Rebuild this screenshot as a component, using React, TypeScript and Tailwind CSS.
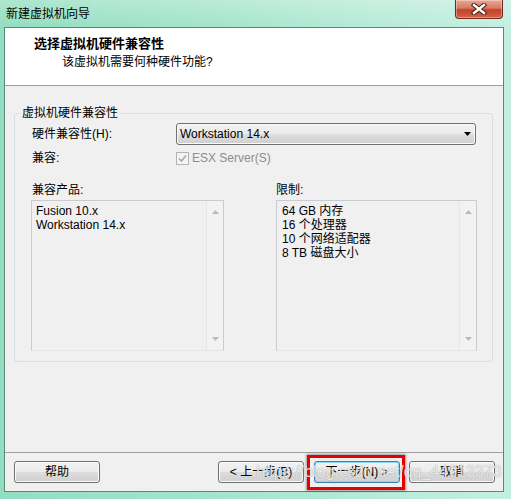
import React from "react";

const font = "font-['Liberation_Sans','Noto_Sans_CJK_SC',sans-serif]";
const btnBg =
  "bg-[linear-gradient(to_bottom,#f2f2f2_0%,#ebebeb_48%,#dddddd_52%,#cfcfcf_100%)]";

function Btn({ children, primary = false }: { children: React.ReactNode; primary?: boolean }) {
  return (
    <div
      className={`w-[86px] h-[22px] rounded-[3px] border flex items-center justify-center text-[12px] leading-[14px] text-black ${btnBg} ${
        primary
          ? "border-[#3c7fb1] shadow-[inset_0_0_0_1px_#8fd8f2]"
          : "border-[#707070] shadow-[inset_0_0_0_1px_#fbfbfb]"
      }`}
    >
      {children}
    </div>
  );
}

function ScrollCol() {
  return (
    <div className="w-[17px] h-full flex flex-col items-center justify-between py-[9px] border-l border-[#e6e6e6] bg-[#f2f2f2]">
      <svg width="7" height="4" viewBox="0 0 7 4">
        <path d="M0 4 L3.5 0 L7 4 Z" fill="#b9b9b9" />
      </svg>
      <svg width="7" height="4" viewBox="0 0 7 4">
        <path d="M0 0 L3.5 4 L7 0 Z" fill="#b9b9b9" />
      </svg>
    </div>
  );
}

function ListBox({ items, width, padLeft }: { items: string[]; width: string; padLeft: string }) {
  return (
    <div className={`${width} h-[151px] border border-[#c9cbd0] border-b-[#e3e5e8] flex bg-[#f0f0f0]`}>
      <div className={`flex-1 pt-[3px] ${padLeft} text-[12px] leading-[14px] text-black`}>
        {items.map((t) => (
          <div key={t} className="whitespace-nowrap">
            {t}
          </div>
        ))}
      </div>
      <ScrollCol />
    </div>
  );
}

export default function App() {
  return (
    <div
      className={`relative w-[511px] h-[499px] overflow-hidden flex flex-col ${font} bg-[linear-gradient(to_right,#92dec0_0%,#a3e4cb_40%,#b8ebd8_75%,#c4efe0_100%)]`}
    >
      {/* Title bar */}
      <div className="h-[27px] flex items-start bg-[linear-gradient(to_bottom,rgba(255,255,255,0.25),rgba(255,255,255,0))]">
        <div className="pl-[6px] pt-[6px] text-[12px] leading-[16px] text-black">新建虚拟机向导</div>
        <div className="ml-auto mr-[8px] w-[48px] h-[19px] rounded-b-[4px] border border-t-0 border-[#6b2a1e] bg-[linear-gradient(to_bottom,#e9a796_0%,#d77a62_45%,#c2412a_55%,#d2644a_100%)] flex items-center justify-center shadow-[inset_0_0_0_1px_rgba(255,255,255,0.35)]">
          <svg width="16" height="12" viewBox="0 0 16 12">
            <path d="M3 2 L13 10 M13 2 L3 10" stroke="#4a1d14" strokeWidth="4.4" strokeLinecap="square" />
            <path d="M3 2 L13 10 M13 2 L3 10" stroke="#ffffff" strokeWidth="2.4" strokeLinecap="square" />
          </svg>
        </div>
      </div>

      {/* Client area */}
      <div className="ml-[4px] mr-[7px] mb-[7px] flex-1 border border-[#5f8677] bg-[#f0f0f0] flex flex-col">
        {/* Header */}
        <div className="h-[58px] bg-white border-b border-[#a0a0a0] pl-[29px] pt-[8px]">
          <div className="text-[13px] leading-[16px] font-bold text-black">选择虚拟机硬件兼容性</div>
          <div className="mt-[2px] pl-[28px] text-[12px] leading-[16px] text-black">该虚拟机需要何种硬件功能?</div>
        </div>

        {/* Body */}
        <fieldset className="mt-[20px] ml-[9px] mr-[10px] border border-[#d5dfe5] rounded-[3px] p-0 pb-[10px]">
          <legend className="ml-[5px] px-[2px] text-[12px] leading-[14px] text-black">虚拟机硬件兼容性</legend>
          <div className="pt-[3px] pl-[17px] flex flex-col">
            <div className="flex items-center h-[22px]">
              <div className="w-[144px] text-[12px] leading-[14px] text-black">硬件兼容性(H):</div>
              <div
                className={`w-[300px] h-[22px] rounded-[3px] border border-[#707070] ${btnBg} shadow-[inset_0_0_0_1px_#fbfbfb] flex items-center pl-[3px] pr-[4px]`}
              >
                <span className="flex-1 text-[12px] leading-[14px] text-black">Workstation 14.x</span>
                <svg width="7" height="4" viewBox="0 0 7 4">
                  <path d="M0 0 L7 0 L3.5 4 Z" fill="#000" />
                </svg>
              </div>
            </div>
            <div className="flex items-center h-[14px] mt-[6px]">
              <div className="w-[144px] text-[12px] leading-[14px] text-black">兼容:</div>
              <div className="w-[13px] h-[13px] border border-[#b4b4b4] bg-[#f4f4f4] flex items-center justify-center">
                <svg width="9" height="9" viewBox="0 0 9 9">
                  <path d="M1 4.5 L3.5 7 L8 1.5" stroke="#a9a9a9" strokeWidth="1.6" fill="none" />
                </svg>
              </div>
              <span className="ml-[3px] text-[12px] leading-[14px] text-[#8d8d8d]">ESX Server(S)</span>
            </div>
            <div className="flex mt-[18px]">
              <div className="w-[244px] text-[12px] leading-[14px] text-black">兼容产品:</div>
              <div className="text-[12px] leading-[14px] text-black">限制:</div>
            </div>
            <div className="flex mt-[3px] -ml-[1px]">
              <ListBox items={["Fusion 10.x", "Workstation 14.x"]} width="w-[193px]" padLeft="pl-[4px]" />
              <div className="ml-[52px]">
                <ListBox
                  items={["64 GB 内存", "16 个处理器", "10 个网络适配器", "8 TB 磁盘大小"]}
                  width="w-[201px]"
                  padLeft="pl-[5px]"
                />
              </div>
            </div>
          </div>
        </fieldset>

        <div className="flex-1" />
        <div className="h-[1px] bg-[#a0a0a0]" />
        <div className="flex items-center mt-[8px] mb-[8px] pl-[9px] pr-[8px]">
          <Btn>帮助</Btn>
          <div className="ml-auto flex">
            <Btn>&lt; 上一步(B)</Btn>
            <div className="relative ml-[10px]">
              <Btn primary>下一步(N) &gt;</Btn>
              <div className="absolute -left-[7px] -right-[5px] -top-[6px] -bottom-[7px] border-[3px] border-[#e60000] shadow-[0_0_2px_1px_rgba(0,0,0,0.35)] pointer-events-none" />
            </div>
            <div className="ml-[9px]">
              <Btn>取消</Btn>
            </div>
          </div>
        </div>
      </div>

      {/* Watermark */}
      <div className="absolute left-[256px] top-[463px] text-[16px] leading-[18px] font-['Liberation_Sans',sans-serif] text-white/80 [text-shadow:0_0_1px_rgba(90,90,90,0.7)] pointer-events-none whitespace-nowrap">
        https://blog.csdn.net/qq_44913373
      </div>
    </div>
  );
}
